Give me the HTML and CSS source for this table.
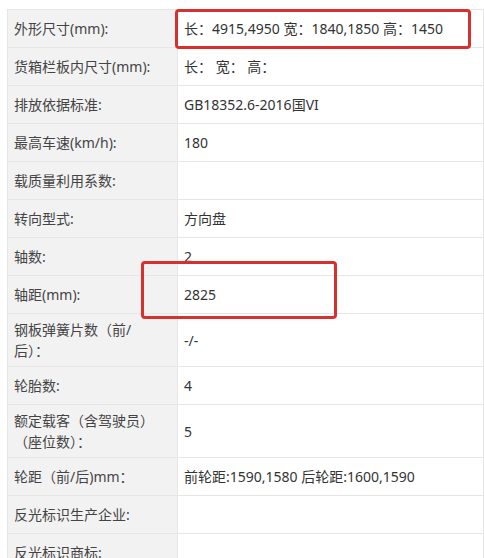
FILE: index.html
```html
<!DOCTYPE html>
<html lang="zh-CN">
<head>
    <meta charset="UTF-8">
    <title>车辆参数</title>
    <link rel="stylesheet" href="styles.css">
</head>
<body>

<div class="sheet">
    <table class="spec-table">
        <colgroup>
            <col class="col-label">
            <col class="col-value">
        </colgroup>
        <tr>
            <td class="label">外形尺寸(mm):</td>
            <td>长：4915,4950 宽：1840,1850 高：1450</td>
        </tr>
        <tr>
            <td class="label">货箱栏板内尺寸(mm):</td>
            <td>长：&nbsp;宽：&nbsp;高：</td>
        </tr>
        <tr>
            <td class="label">排放依据标准:</td>
            <td>GB18352.6-2016国VI</td>
        </tr>
        <tr>
            <td class="label">最高车速(km/h):</td>
            <td>180</td>
        </tr>
        <tr>
            <td class="label">载质量利用系数:</td>
            <td></td>
        </tr>
        <tr>
            <td class="label">转向型式:</td>
            <td>方向盘</td>
        </tr>
        <tr>
            <td class="label">轴数:</td>
            <td>2</td>
        </tr>
        <tr>
            <td class="label">轴距(mm):</td>
            <td>2825</td>
        </tr>
        <tr>
            <td class="label">钢板弹簧片数（前/后）：</td>
            <td>-/-</td>
        </tr>
        <tr>
            <td class="label">轮胎数:</td>
            <td>4</td>
        </tr>
        <tr>
            <td class="label">额定载客（含驾驶员）（座位数）：</td>
            <td>5</td>
        </tr>
        <tr>
            <td class="label">轮距（前/后)mm：</td>
            <td>前轮距:1590,1580 后轮距:1600,1590</td>
        </tr>
        <tr>
            <td class="label">反光标识生产企业:</td>
            <td></td>
        </tr>
        <tr>
            <td class="label">反光标识商标:</td>
            <td></td>
        </tr>
    </table>

    <!-- 红框标注 -->
    <div class="mark mark-size"></div>
    <div class="mark mark-wheelbase"></div>
</div>

</body>
</html>
```

FILE: styles.css
```css
body {
    margin: 0;
    background: #fff;
    font-family: "Noto Sans", "Noto Sans CJK SC", sans-serif;
    color: #333;
    overflow: hidden;
}

.sheet {
    position: relative;
    padding: 9px 0 0 7px;
}

.spec-table {
    width: 477px;
    border-collapse: collapse;
    table-layout: fixed;
    font-size: 14px;
    line-height: 21px;
}

.col-label {
    width: 170px;
}

.spec-table td {
    height: 38px;
    padding: 5px 6px;
    border: 1px solid #e6e6e6;
    vertical-align: middle;
    box-sizing: border-box;
}

.spec-table td.label {
    padding-right: 16px;
    background-color: #f2f2f2;
    color: #444;
}

/* 标注框 */
.mark {
    position: absolute;
    border: 3px solid #d6312e;
    border-radius: 4px;
    box-sizing: border-box;
}

.mark-size {
    left: 175px;
    top: 9px;
    width: 296px;
    height: 40px;
}

.mark-wheelbase {
    left: 141px;
    top: 261px;
    width: 196px;
    height: 58px;
}
```
